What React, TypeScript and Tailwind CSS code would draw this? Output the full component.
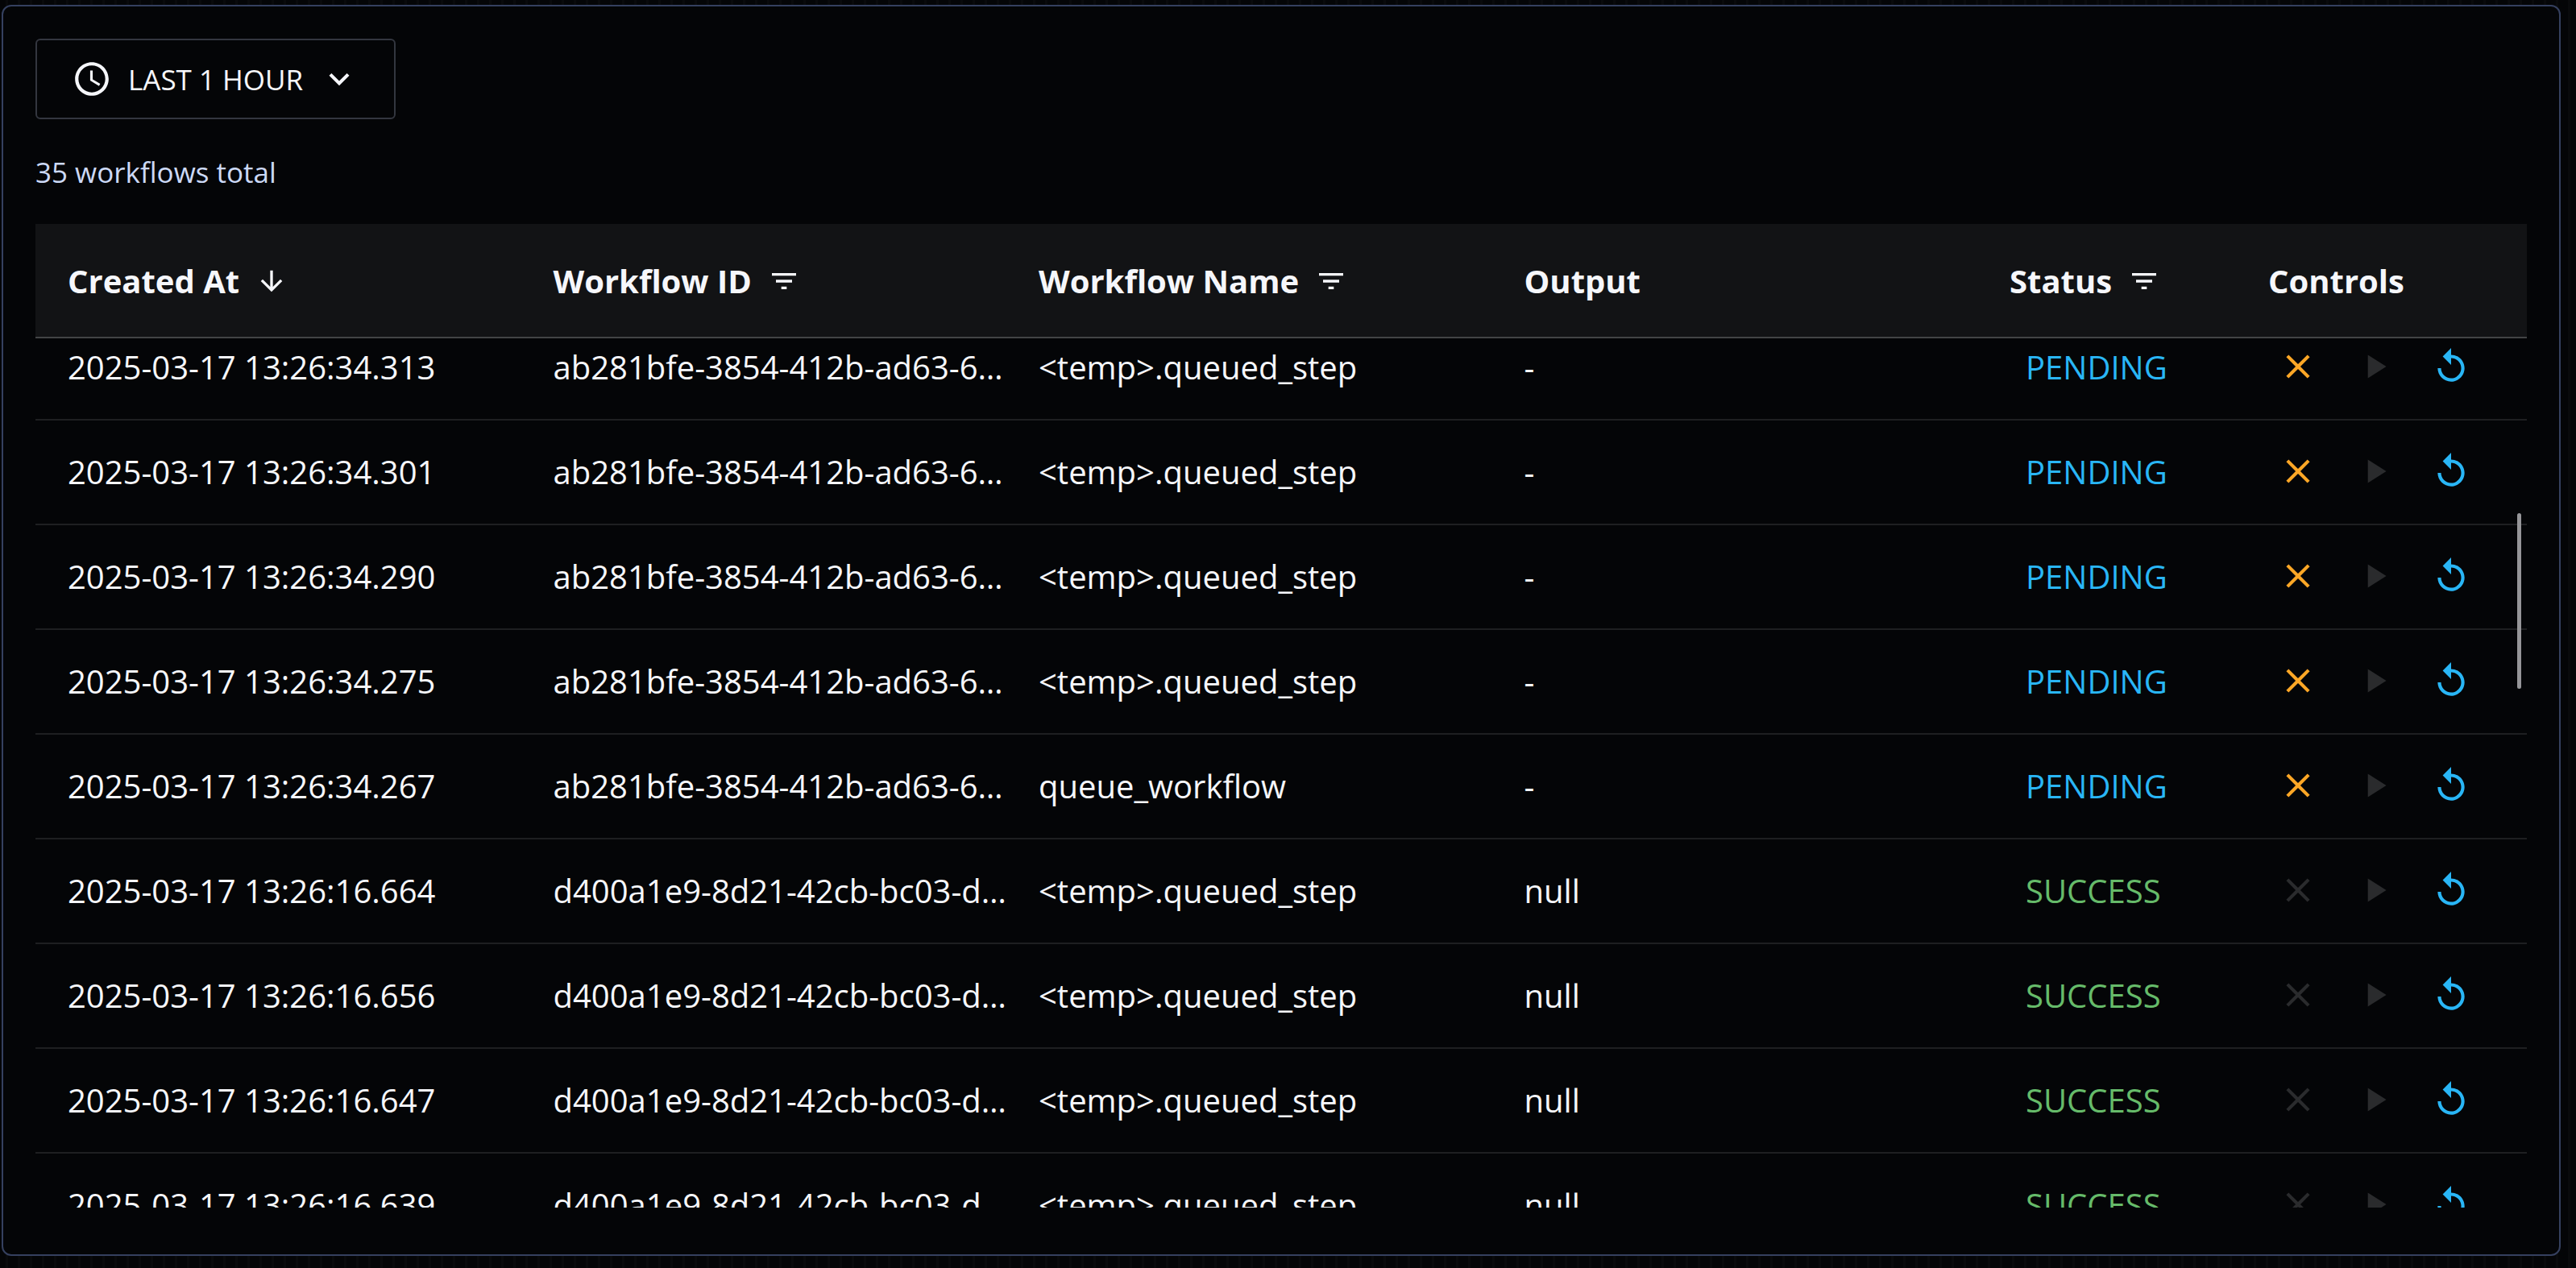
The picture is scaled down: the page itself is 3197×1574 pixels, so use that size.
import { useLayoutEffect, useRef } from "react";
import type { ReactNode } from "react";

type Row = { at: string; id: string; name: string; output: string; status: "PENDING" | "SUCCESS" };

const PENDING_ID = "ab281bfe-3854-412b-ad63-6…";
const SUCCESS_ID = "d400a1e9-8d21-42cb-bc03-d…";
const STEP = "<temp>.queued_step";

const pending = (at: string, name = STEP): Row => ({ at, id: PENDING_ID, name, output: "-", status: "PENDING" });
const success = (at: string): Row => ({ at, id: SUCCESS_ID, name: STEP, output: "null", status: "SUCCESS" });

const rows: Row[] = [
  pending("2025-03-17 13:26:34.313"),
  pending("2025-03-17 13:26:34.301"),
  pending("2025-03-17 13:26:34.290"),
  pending("2025-03-17 13:26:34.275"),
  pending("2025-03-17 13:26:34.267", "queue_workflow"),
  success("2025-03-17 13:26:16.664"),
  success("2025-03-17 13:26:16.656"),
  success("2025-03-17 13:26:16.647"),
  success("2025-03-17 13:26:16.639"),
];

function Icon({ d, className }: { d: string; className: string }) {
  return (
    <svg viewBox="0 0 24 24" fill="currentColor" aria-hidden="true" className={`shrink-0 ${className}`}>
      <path d={d} />
    </svg>
  );
}

const CLOCK =
  "M11.99 2C6.47 2 2 6.48 2 12s4.47 10 9.99 10C17.52 22 22 17.52 22 12S17.52 2 11.99 2zM12 20c-4.42 0-8-3.58-8-8s3.58-8 8-8 8 3.58 8 8-3.58 8-8 8zm.5-13H11v6l5.25 3.15.75-1.23-4.5-2.67z";
const CHEVRON = "M7.41 8.59 12 13.17l4.59-4.58L18 10l-6 6-6-6 1.41-1.41z";
const ARROW = "m20 12-1.41-1.41L13 16.17V4h-2v12.17l-5.58-5.59L4 12l8 8 8-8z";
const FILTER = "M10 18h4v-2h-4v2zM3 6v2h18V6H3zm3 7h12v-2H6v2z";
const CLOSE = "M19 6.41 17.59 5 12 10.59 6.41 5 5 6.41 10.59 12 5 17.59 6.41 19 12 13.41 17.59 19 19 17.59 13.41 12z";
const PLAY = "M8 5v14l11-7z";
const REPLAY = "M12 5V1L7 6l5 5V7c3.31 0 6 2.69 6 6s-2.69 6-6 6-6-2.69-6-6H4c0 4.42 3.58 8 8 8s8-3.58 8-8-3.58-8-8-8z";

function HeaderCell({ label, icon, action }: { label: string; icon?: string; action?: string }) {
  return (
    <th
      scope="col"
      className="sticky top-0 z-10 h-[142px] border-b-2 border-[#424445] bg-[#121315] p-0 pt-px pl-10 text-left font-bold whitespace-nowrap"
    >
      <div className="flex items-center gap-5">
        {label}
        {icon && (
          <button type="button" aria-label={action}>
            <Icon d={icon} className="size-10" />
          </button>
        )}
      </div>
    </th>
  );
}

function Cell({ children, className = "pl-10" }: { children: ReactNode; className?: string }) {
  return (
    <td className={`h-[130px] border-b-2 border-[#1e1f21] pt-0 pr-0 whitespace-nowrap ${className}`}>{children}</td>
  );
}

export default function App() {
  const scroller = useRef<HTMLDivElement>(null);

  useLayoutEffect(() => {
    if (scroller.current) scroller.current.scrollTop = 28;
  }, []);

  return (
    <div className="flex h-screen bg-[#040507] bg-[repeating-linear-gradient(90deg,#040507_0px,#040507_7px,#090a0c_7px,#090a0c_10px,#040507_10px,#040507_15px)] pt-[6px] pr-[19px] pb-[15px] pl-[2px] font-['Open_Sans',sans-serif] text-[#f6f7fb]">
      <main className="flex min-w-0 flex-1 flex-col rounded-xl border-2 border-[#35405f] bg-[#040507] px-10 pt-10 pb-[58px]">
        <button
          type="button"
          className="flex h-[100px] items-center gap-5 self-start rounded-md border-2 border-[#33363f] px-[43px] text-[35px] leading-none font-medium"
        >
          <Icon d={CLOCK} className="size-[50px]" />
          LAST 1 HOUR
          <Icon d={CHEVRON} className="size-[50px]" />
        </button>
        <p className="mt-10 mb-[38px] text-[35px] leading-[52px] text-[#ccd9f6]">35 workflows total</p>

        <div className="relative min-h-0 flex-1">
          <div ref={scroller} className="h-full overflow-y-auto [scrollbar-width:none]">
            <table className="w-full table-fixed border-separate border-spacing-0 text-[40px] leading-[56px]">
              <colgroup>
                <col />
                <col />
                <col />
                <col />
                <col className="w-[321px]" />
                <col className="w-[361px]" />
              </colgroup>
              <thead>
                <tr>
                  <HeaderCell label="Created At" icon={ARROW} action="Sort by created at" />
                  <HeaderCell label="Workflow ID" icon={FILTER} action="Filter workflow ID" />
                  <HeaderCell label="Workflow Name" icon={FILTER} action="Filter workflow name" />
                  <HeaderCell label="Output" />
                  <HeaderCell label="Status" icon={FILTER} action="Filter status" />
                  <HeaderCell label="Controls" />
                </tr>
              </thead>
              <tbody>
                {rows.map((row) => {
                  const active = row.status === "PENDING";
                  return (
                    <tr key={row.at}>
                      <Cell>{row.at}</Cell>
                      <Cell>{row.id}</Cell>
                      <Cell>{row.name}</Cell>
                      <Cell>{row.output}</Cell>
                      <Cell className={active ? "pl-[60px] text-[#29b6f6]" : "pl-[60px] text-[#66bb6a]"}>
                        {row.status}
                      </Cell>
                      <Cell className="pb-0.5 pl-9">
                        <div className="flex items-center gap-[13px]">
                          <button
                            type="button"
                            aria-label="Cancel"
                            disabled={!active}
                            className={active ? "p-4 text-[#ffa726]" : "p-4 text-[#2a2b2d]"}
                          >
                            <Icon d={CLOSE} className="size-[50px]" />
                          </button>
                          <button type="button" aria-label="Resume" disabled className="p-4 text-[#2a2b2d]">
                            <Icon d={PLAY} className="size-[50px]" />
                          </button>
                          <button type="button" aria-label="Restart" className="p-4 text-[#29b6f6]">
                            <Icon d={REPLAY} className="size-[50px]" />
                          </button>
                        </div>
                      </Cell>
                    </tr>
                  );
                })}
              </tbody>
            </table>
          </div>
          <div className="absolute top-[359px] right-[7px] z-20 h-[218px] w-[5px] rounded-full bg-[#969699]" />
        </div>
      </main>
    </div>
  );
}
